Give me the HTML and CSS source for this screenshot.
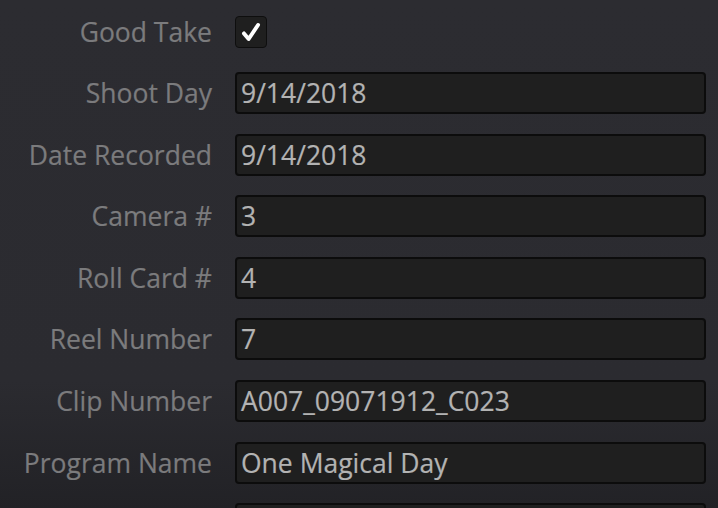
FILE: index.html
```html
<!DOCTYPE html>
<html>
<head>
<meta charset="utf-8">
<link rel="stylesheet" href="styles.css">
</head>
<body>
<div class="form">
  <div class="row">
    <div class="label">Good Take</div>
    <div class="field">
      <div class="check">
        <svg viewBox="0 0 32 32" width="32" height="32"><path d="M8.5 17.5 L13.5 23.5 L23.5 8.5" fill="none" stroke="#ffffff" stroke-width="4.2" stroke-linecap="round" stroke-linejoin="round"/></svg>
      </div>
    </div>
  </div>
  <div class="row"><div class="label">Shoot Day</div><div class="field"><div class="input">9/14/2018</div></div></div>
  <div class="row"><div class="label">Date Recorded</div><div class="field"><div class="input">9/14/2018</div></div></div>
  <div class="row"><div class="label">Camera #</div><div class="field"><div class="input">3</div></div></div>
  <div class="row"><div class="label">Roll Card #</div><div class="field"><div class="input">4</div></div></div>
  <div class="row"><div class="label">Reel Number</div><div class="field"><div class="input">7</div></div></div>
  <div class="row"><div class="label">Clip Number</div><div class="field"><div class="input">A007_09071912_C023</div></div></div>
  <div class="row"><div class="label">Program Name</div><div class="field"><div class="input">One Magical Day</div></div></div>
  <div class="row"><div class="label"></div><div class="field"><div class="input"></div></div></div>
</div>
</body>
</html>
```
FILE: styles.css
```css
html, body {
  margin: 0;
  padding: 0;
  height: 100%;
  overflow: hidden;
}
body {
  background: linear-gradient(to bottom, #2c2c31 0%, #2b2b30 75%, #222226 100%);
  font-family: "Open Sans", "Noto Sans", sans-serif;
}
.form {
  display: flex;
  flex-direction: column;
  gap: 19.6px;
  padding-top: 10.5px;
  height: 497px;
  overflow: hidden;
}
.row {
  display: flex;
  align-items: center;
  height: 42px;
  flex: none;
}
.label {
  width: 212px;
  text-align: right;
  color: #7b7b7d;
  font-size: 26.5px;
  line-height: 42px;
  flex: none;
  white-space: nowrap;
  -webkit-text-stroke: 0.2px #7b7b7d;
}
.field {
  margin-left: 23px;
  flex: none;
  width: 471px;
  display: flex;
  align-items: center;
}
.check {
  width: 30px;
  height: 30px;
  border: 1px solid #0e0e0e;
  border-radius: 4px;
  background: #1f1f1f;
  display: flex;
  align-items: center;
  justify-content: center;
}
.check svg {
  width: 30px;
  height: 30px;
}
.input {
  box-sizing: border-box;
  width: 471px;
  height: 42px;
  border: 2px solid #0c0c0c;
  border-radius: 4px;
  background: #1f1f1f;
  color: #b3b3b3;
  font-size: 26.5px;
  line-height: 38px;
  padding-left: 4px;
  white-space: nowrap;
  -webkit-text-stroke: 0.2px #b3b3b3;
}
```
